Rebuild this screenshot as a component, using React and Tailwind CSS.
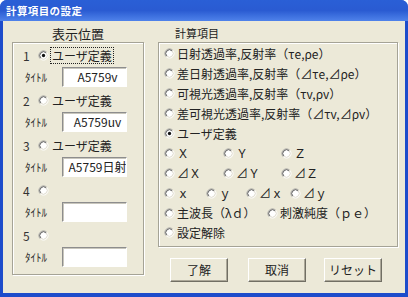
import React from 'react';

const jp = { fontFamily: '"Noto Sans CJK JP", "Noto Sans", sans-serif' };

const Radio = ({ checked }) => (
  <svg width="11" height="11" viewBox="0 0 12 12" className="shrink-0">
    <circle cx="6" cy="6" r="4.5" fill="#fff" />
    <path d="M2.46 9.54 A5 5 0 0 1 9.54 2.46" fill="none" stroke="#9a9a9a" strokeWidth="1" />
    <path d="M9.54 2.46 A5 5 0 0 1 2.46 9.54" fill="none" stroke="#fff" strokeWidth="1" />
    <path d="M3.17 8.83 A4 4 0 0 1 8.83 3.17" fill="none" stroke="#5a5a5a" strokeWidth="1" />
    <path d="M8.83 3.17 A4 4 0 0 1 3.17 8.83" fill="none" stroke="#ddd9cc" strokeWidth="1" />
    {checked && <circle cx="6" cy="6" r="1.8" fill="#111" />}
  </svg>
);

const Opt = ({ label, checked, w }) => (
  <div className="flex items-center gap-[2px]" style={w ? { width: w } : undefined}>
    <Radio checked={checked} />
    {label && <span className="whitespace-nowrap">{label}</span>}
  </div>
);

const slots = [
  { n: '1', label: 'ユーザ定義', title: 'A5759v', checked: true, focus: true },
  { n: '2', label: 'ユーザ定義', title: 'A5759uv' },
  { n: '3', label: 'ユーザ定義', title: 'A5759日射' },
  { n: '4', label: '', title: '' },
  { n: '5', label: '', title: '' },
];

const Btn = ({ children, className }) => (
  <button className={"h-[24px] w-[58px] bg-[#ECE9D8] text-[12px] text-[#222] border border-t-white border-l-white border-b-[#716f64] border-r-[#716f64] shadow-[inset_-1px_-1px_0_#aca899] " + (className || '')}>
    {children}
  </button>
);

export default function App() {
  return (
    <div className="w-[408px] h-[297px] flex flex-col bg-[#1d4ccb] rounded-t-[7px] overflow-hidden text-[#222]" style={jp}>
      <div className="h-[21px] shrink-0 flex items-center pl-[6px] bg-gradient-to-b from-[#2a5fd6] via-[#2a5bd2] to-[#4f82ea]">
        <span className="text-white text-[10.5px] font-bold tracking-[0.4px]">計算項目の設定</span>
      </div>
      <div className="flex-1 mx-[3px] mb-[4px] bg-[#ECE9D8] flex pt-[3px]">
        {/* 表示位置 */}
        <div className="ml-[9px] w-[132px] flex flex-col">
          <div className="h-[18px] flex items-center justify-center text-[13px] leading-none">表示位置</div>
          <div className="h-[233px] border border-[#a5a396] shadow-[inset_1px_1px_0_#fff,1px_1px_0_#fff] pt-[2px] flex flex-col gap-[2px] text-[12px]">
            {slots.map(s => (
              <div key={s.n} className="flex flex-col">
                <div className="h-[21px] flex items-center pl-[10px]">
                  <span className="w-[15px] text-[#333]">{s.n}</span>
                  <Radio checked={s.checked} />
                  {s.label && (
                    <span className={"ml-[1px] px-[1px] leading-[15px] " + (s.focus ? 'border border-dotted border-[#222]' : 'border border-transparent')}>{s.label}</span>
                  )}
                </div>
                <div className="h-[22px] flex items-center pl-[12px]">
                  <span className="w-[37px] text-[11px] text-[#333]">ﾀｲﾄﾙ</span>
                  <div className="w-[65px] h-[20px] bg-white border border-t-[#8d8d8d] border-l-[#8d8d8d] border-b-white border-r-white shadow-[inset_1px_1px_0_#c8c6bc] flex items-center justify-center pl-[6px] text-[12px] whitespace-nowrap overflow-hidden">
                    {s.title}
                  </div>
                </div>
              </div>
            ))}
          </div>
        </div>

        {/* 計算項目 */}
        <div className="ml-[14px] w-[240px] flex flex-col">
          <div className="h-[18px] flex items-center pl-[17px] text-[11px] leading-none">計算項目</div>
          <div className="h-[205px] border border-[#a5a396] shadow-[inset_1px_1px_0_#fff,1px_1px_0_#fff] pt-[1px] pl-[5px] flex flex-col text-[12px]">
            <div className="h-[19.9px] flex items-center"><Opt label="日射透過率,反射率（τe,ρe）" /></div>
            <div className="h-[19.9px] flex items-center"><Opt label="差日射透過率,反射率（⊿τe,⊿ρe）" /></div>
            <div className="h-[19.9px] flex items-center"><Opt label="可視光透過率,反射率（τv,ρv）" /></div>
            <div className="h-[19.9px] flex items-center"><Opt label="差可視光透過率,反射率（⊿τv,⊿ρv）" /></div>
            <div className="h-[19.9px] flex items-center"><Opt label="ユーザ定義" checked /></div>
            <div className="h-[19.9px] flex items-center">
              <Opt label="Ｘ" w={59} /><Opt label="Ｙ" w={58} /><Opt label="Ｚ" />
            </div>
            <div className="h-[19.9px] flex items-center">
              <Opt label="⊿Ｘ" w={59} /><Opt label="⊿Ｙ" w={58} /><Opt label="⊿Ｚ" />
            </div>
            <div className="h-[19.9px] flex items-center">
              <Opt label="ｘ" w={42} /><Opt label="ｙ" w={40} /><Opt label="⊿ｘ" w={44} /><Opt label="⊿ｙ" />
            </div>
            <div className="h-[19.9px] flex items-center">
              <Opt label="主波長（λｄ）" w={103} /><Opt label="刺激純度（ｐｅ）" />
            </div>
            <div className="h-[19.9px] flex items-center"><Opt label="設定解除" /></div>
          </div>
          <div className="mt-[11px] flex">
            <Btn className="ml-[12px]">了解</Btn>
            <Btn className="ml-[20px]">取消</Btn>
            <Btn className="ml-[18px]">リセット</Btn>
          </div>
        </div>
      </div>
    </div>
  );
}
